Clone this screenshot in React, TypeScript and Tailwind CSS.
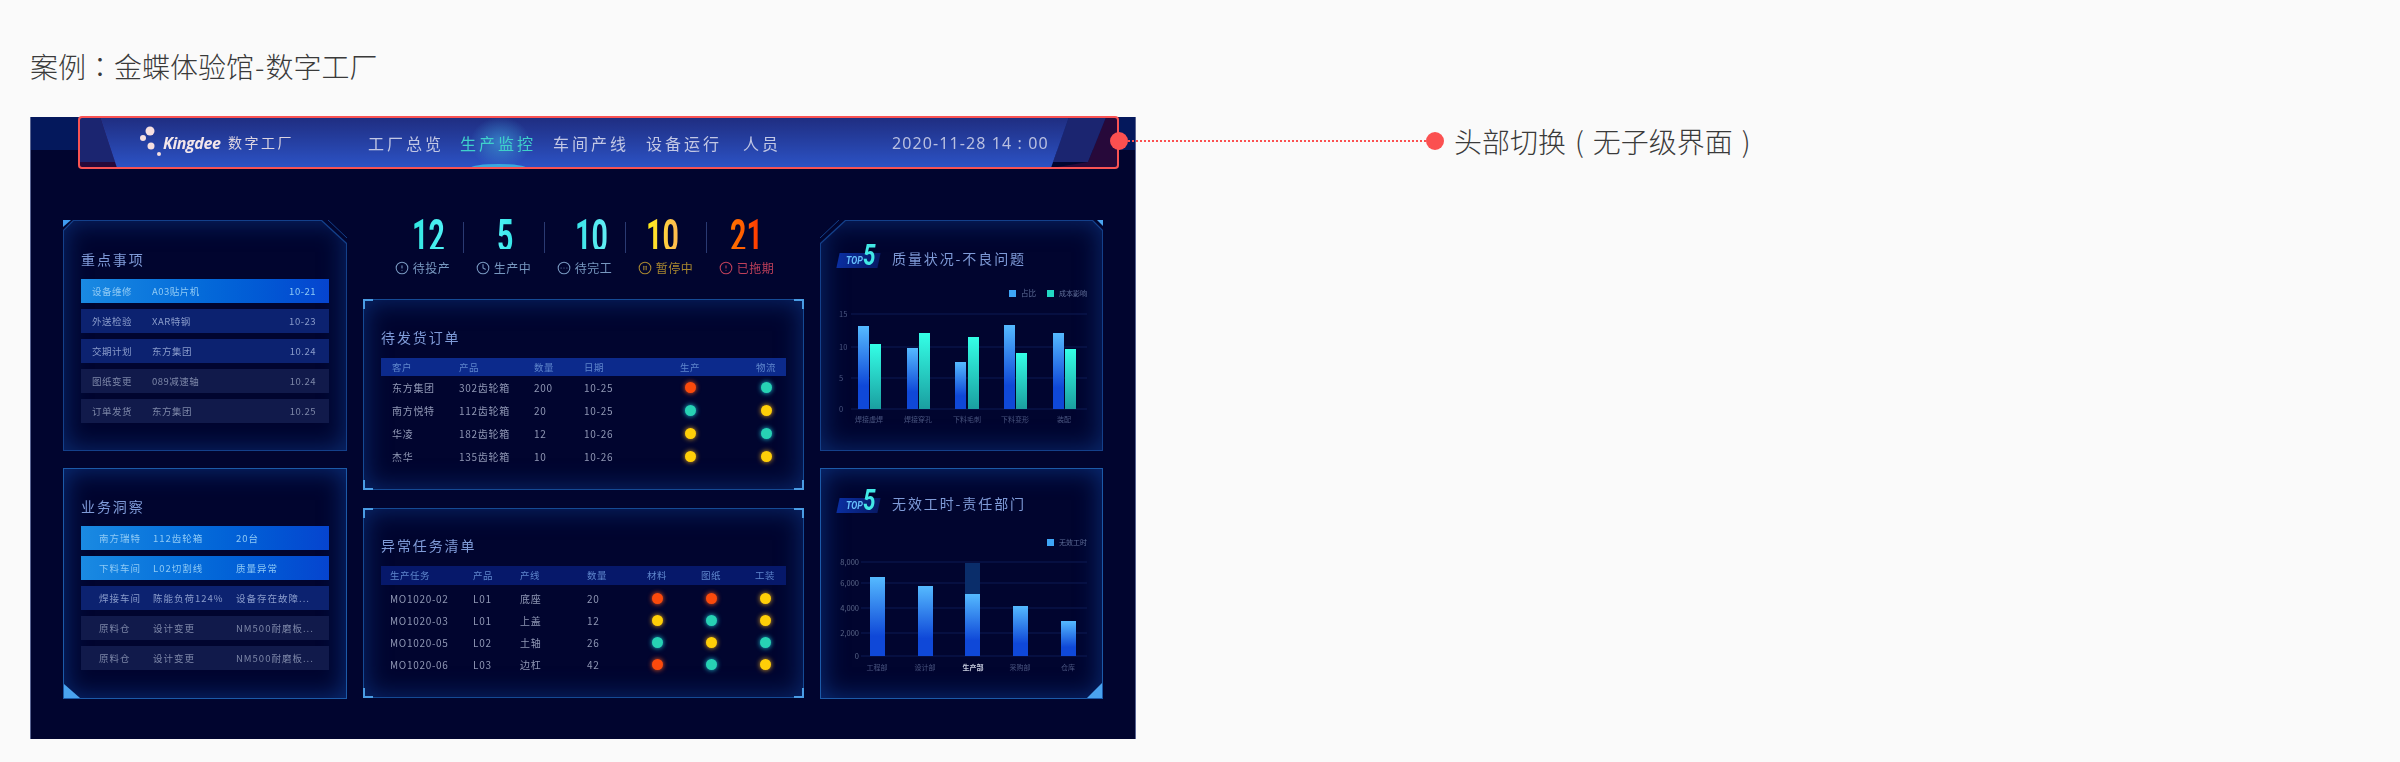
import type { ReactNode } from 'react';
import { CircleAlert, CircleEllipsis, CirclePause, Clock } from 'lucide-react';

const kpis = [
    { value: '12', label: '待投产', Icon: CircleAlert, num: 'from-[#2fe6e0] to-[#4ff2f6]', text: 'text-[#7898c0]', shift: 'ml-[11px]' },
    { value: '5', label: '生产中', Icon: Clock, num: 'from-[#4ff2f6] to-[#36e6e8]', text: 'text-[#7898c0]', shift: 'ml-[4px]' },
    { value: '10', label: '待完工', Icon: CircleEllipsis, num: 'from-[#35e4e8] to-[#62eef5]', text: 'text-[#7898c0]', shift: 'ml-[13px]' },
    { value: '10', label: '暂停中', Icon: CirclePause, num: 'from-[#ffee00] to-[#ffb94f]', text: 'text-[#a88730]', shift: 'ml-[-7px]' },
    { value: '21', label: '已拖期', Icon: CircleAlert, num: 'from-[#ff7400] to-[#ff2a00]', text: 'text-[#c0405a]', shift: 'ml-0' },
];

const focusRows = [
    ['设备维修', 'A03贴片机', '10-21', 'active'],
    ['外送检验', 'XAR特钢', '10-23', 'blue'],
    ['交期计划', '东方集团', '10.24', 'blue'],
    ['图纸变更', '089减速轴', '10.24', 'dim'],
    ['订单发货', '东方集团', '10.25', 'dim'],
];

const insightRows = [
    ['南方瑞特', '112齿轮箱', '20台', 'active'],
    ['下料车间', 'L02切割线', '质量异常', 'active'],
    ['焊接车间', '陈能负荷124%', '设备存在故障...', 'blue'],
    ['原料仓', '设计变更', 'NM500耐磨板...', 'dim'],
    ['原料仓', '设计变更', 'NM500耐磨板...', 'dim'],
];

const orders = [
    ['东方集团', '302齿轮箱', '200', '10-25', 'red', 'green'],
    ['南方悦特', '112齿轮箱', '20', '10-25', 'green', 'yellow'],
    ['华凌', '182齿轮箱', '12', '10-26', 'yellow', 'green'],
    ['杰华', '135齿轮箱', '10', '10-26', 'yellow', 'yellow'],
];

const tasks = [
    ['MO1020-02', 'L01', '底座', '20', 'red', 'red', 'yellow'],
    ['MO1020-03', 'L01', '上盖', '12', 'yellow', 'green', 'yellow'],
    ['MO1020-05', 'L02', '土轴', '26', 'green', 'yellow', 'green'],
    ['MO1020-06', 'L03', '边杠', '42', 'red', 'green', 'yellow'],
];

const rowStyles: Record<string, string> = {
    active: 'bg-gradient-to-r from-[#1a8ae2] to-[#0644cf] text-[#8fcaf5]',
    blue: 'bg-[#0c2270] text-[#8a9ccb]',
    dim: 'bg-[#111a4b] text-[#7d87a8]',
};

function Dot({ color }: { color: string }) {
    const cls =
        color === 'red'
            ? 'bg-[#fb4a0c] shadow-[0_0_5px_#ff5a1a]'
            : color === 'green'
              ? 'bg-[#27d2b4] shadow-[0_0_5px_#22c8d8]'
              : 'bg-[#ffcf08] shadow-[0_0_5px_#e8a820]';
    return <span className={`block w-[11px] h-[11px] rounded-full mx-auto ${cls}`} />;
}

function Title({ children }: { children: ReactNode }) {
    return <h2 className="text-[14px] leading-[20px] tracking-[1.9px] text-[#7f9bd8]">{children}</h2>;
}

function Top5() {
    return (
        <div className="relative w-[41px] h-[21px] flex items-end">
            <div className="absolute left-0 right-0 bottom-0 h-[15px] -skew-x-12 bg-gradient-to-r from-[#0a2ea0] to-[#071a66]" />
            <span className="relative ml-[8px] mb-[2px] w-[17px] text-[10px] leading-[11px] font-bold italic text-[#66bdfb] font-['Roboto',sans-serif] scale-x-90 origin-left">TOP</span>
            <span className="relative w-[14px] text-[30px] leading-[26px] font-bold italic text-[#42e8e6] font-['Roboto',sans-serif] scale-x-75 origin-left">5</span>
        </div>
    );
}

function Corner({ className }: { className: string }) {
    return <div className={`absolute w-[10px] h-[10px] border-[#4a9ce4] ${className}`} />;
}

function BracketPanel({ className, children }: { className: string; children: ReactNode }) {
    return (
        <section className={`relative border border-[#154a94] bg-[#01052f] shadow-[inset_0_0_26px_#0a2b70] ${className}`}>
            <Corner className="-left-px -top-px border-l-2 border-t-2" />
            <Corner className="-right-px -top-px border-r-2 border-t-2" />
            <Corner className="-left-px -bottom-px border-l-2 border-b-2" />
            <Corner className="-right-px -bottom-px border-r-2 border-b-2" />
            {children}
        </section>
    );
}

function ListRow({ row, cols }: { row: string[]; cols: string }) {
    return (
        <div className={`grid items-center h-[24px] text-[9.5px] tracking-[0.5px] ${cols} ${rowStyles[row[3]]}`}>
            <span>{row[0]}</span>
            <span>{row[1]}</span>
            <span>{row[2]}</span>
        </div>
    );
}

function BarChartOne() {
    const bars = [
        [857, 326, 869, 344],
        [906, 348, 918, 333],
        [954, 362, 967, 337],
        [1003, 325, 1015, 353],
        [1052, 333, 1064, 349],
    ];
    const labels = [['焊接虚焊', 868], ['焊接穿孔', 917], ['下料毛刺', 966], ['下料变形', 1014], ['装配', 1063]] as const;
    const ticks = [['15', 314], ['10', 347], ['5', 378], ['0', 409]] as const;
    return (
        <svg className="block mt-[15px] w-[283px] h-[145px]" viewBox="820 283 283 145">
            <defs>
                <linearGradient id="blueBar" x1="0" y1="0" x2="0" y2="1">
                    <stop offset="0" stopColor="#55baff" />
                    <stop offset="0.72" stopColor="#0f48d8" />
                </linearGradient>
                <linearGradient id="greenBar" x1="0" y1="0" x2="0" y2="1">
                    <stop offset="0" stopColor="#34ffe6" />
                    <stop offset="1" stopColor="#1a9ea0" />
                </linearGradient>
            </defs>
            <rect x="1008" y="290" width="7" height="7" fill="#3ea6f7" />
            <text x="1020" y="296" fontSize="7.5" fill="#5f6e98">占比</text>
            <rect x="1046" y="290" width="7" height="7" fill="#22d8c4" />
            <text x="1058" y="296" fontSize="7" fill="#5f6e98">成本影响</text>
            {ticks.map(([t, y]) => (
                <g key={t}>
                    <line x1="850" x2="1086" y1={y} y2={y} stroke="#0c1a55" />
                    <text x="838" y={y + 3} fontSize="7.5" fill="#4a5680">{t}</text>
                </g>
            ))}
            {bars.map(([bx, by, gx, gy]) => (
                <g key={bx}>
                    <rect x={bx} y={by} width="11" height={409 - by} fill="url(#blueBar)" />
                    <rect x={gx} y={gy} width="11" height={409 - gy} fill="url(#greenBar)" />
                </g>
            ))}
            {labels.map(([t, x]) => (
                <text key={t} x={x} y="422" fontSize="7" textAnchor="middle" fill="#4a5680">{t}</text>
            ))}
        </svg>
    );
}

function BarChartTwo() {
    const bars = [[869, 577], [917, 586], [964, 594], [1012, 606], [1060, 621]];
    const labels = [['工程部', 876], ['设计部', 924], ['生产部', 972], ['采购部', 1019], ['仓库', 1067]] as const;
    const ticks = [['8,000', 562], ['6,000', 583], ['4,000', 608], ['2,000', 633], ['0', 656]] as const;
    return (
        <svg className="block mt-[19px] w-[283px] h-[145px]" viewBox="820 532 283 145">
            <defs>
                <linearGradient id="blueBarTwo" x1="0" y1="0" x2="0" y2="1">
                    <stop offset="0" stopColor="#55baff" />
                    <stop offset="0.75" stopColor="#0f48d8" />
                </linearGradient>
            </defs>
            <rect x="1046" y="539" width="7" height="7" fill="#3ea6f7" />
            <text x="1058" y="545" fontSize="7" fill="#5f6e98">无效工时</text>
            {ticks.map(([t, y]) => (
                <g key={t}>
                    <line x1="860" x2="1086" y1={y} y2={y} stroke="#0c1a55" />
                    <text x="858" y={y + 3} fontSize="7.5" textAnchor="end" fill="#5a6688">{t}</text>
                </g>
            ))}
            <rect x="964" y="563" width="15" height="31" fill="#0a2d6a" />
            {bars.map(([x, y]) => (
                <rect key={x} x={x} y={y} width="15" height={656 - y} fill="url(#blueBarTwo)" />
            ))}
            {labels.map(([t, x]) => (
                <text
                    key={t}
                    x={x}
                    y="670"
                    fontSize="7"
                    textAnchor="middle"
                    fontWeight={t === '生产部' ? 700 : 400}
                    fill={t === '生产部' ? '#c8cedf' : '#4a5680'}
                >
                    {t}
                </text>
            ))}
        </svg>
    );
}

function Header() {
    return (
        <header className="relative ml-[47px] w-[1041px] h-[51px] flex items-center">
            <svg className="absolute inset-0 w-full h-full" viewBox="78 117 1040 51" preserveAspectRatio="none">
                <defs>
                    <linearGradient id="ribbon" x1="0" y1="0" x2="0" y2="1">
                        <stop offset="0" stopColor="#1f2d80" />
                        <stop offset="1" stopColor="#2c53c6" />
                    </linearGradient>
                    <radialGradient id="tabGlow" cx="0.5" cy="0.5" r="0.5">
                        <stop offset="0" stopColor="#3a8fd0" stopOpacity="0.8" />
                        <stop offset="1" stopColor="#3a8fd0" stopOpacity="0" />
                    </radialGradient>
                </defs>
                <rect x="78" y="117" width="40" height="51" fill="#27093a" />
                <polygon points="78,117 100,117 115,162 78,162" fill="#1b2570" />
                <polygon points="1050,168 1118,168 1118,117 1105,117 1087,162" fill="#27093a" />
                <polygon points="1068,117 1105,117 1087,162 1052,162" fill="#1b2570" />
                <polygon points="100,117 1068,117 1050,168 117,168" fill="url(#ribbon)" />
                <rect x="470" y="117" width="60" height="51" fill="url(#tabGlow)" />
                <ellipse cx="498" cy="168" rx="28" ry="4" fill="#39a8e0" />
            </svg>
            <div className="relative flex items-center text-[#c2c7e4]">
                <svg className="ml-[60px] w-[24px] h-[36px]" viewBox="0 0 24 36">
                    <circle cx="12" cy="6" r="4.5" fill="#f6dfe0" />
                    <circle cx="5" cy="13" r="3" fill="#f6dfe0" />
                    <circle cx="13" cy="21" r="3.5" fill="#f6dfe0" />
                    <circle cx="21" cy="29" r="2" fill="#f6dfe0" />
                </svg>
                <span className="ml-[1px] w-[65px] text-[16px] font-bold italic text-[#f3e6ea] font-['Open_Sans',sans-serif] tracking-[-0.4px]">Kingdee</span>
                <span className="text-[14px] tracking-[2.5px] text-[#dcd4e0]">数字工厂</span>
                <nav className="ml-[74px] flex text-[16px] tracking-[3px] leading-[24px]">
                    <span className="w-[92px]">工厂总览</span>
                    <span className="w-[93px] text-[#3fd0cb]">生产监控</span>
                    <span className="w-[93px]">车间产线</span>
                    <span className="w-[97px]">设备运行</span>
                    <span className="w-[149px]">人员</span>
                </nav>
                <span className="text-[16px] tracking-[1.1px] text-[#b9bfe0] font-['Noto_Sans',sans-serif]">2020-11-28 14 : 00</span>
            </div>
        </header>
    );
}

export default function App() {
    return (
        <div className="relative w-[2400px] h-[762px] overflow-hidden bg-[#fafafa] font-['Noto_Sans_CJK_SC','Noto_Sans',sans-serif]">
            <h1 className="pl-[30px] pt-[46px] h-[117px] text-[28px] leading-[40px] font-light text-[#3a3a3a]">
                案例<span className="font-['Noto_Sans_CJK_TC',sans-serif]">：</span>金蝶体验馆<span className="mx-[1px]">-</span>数字工厂
            </h1>

            <main className="ml-[30px] w-[1106px] h-[622px] border-x border-[#5a6592] bg-[linear-gradient(#04185c_0,#04185c_33px,#01052f_33px)] blur-[0.4px]">
                <Header />
                <div className="grid grid-cols-[284px_441px_283px] gap-x-[16px] pl-[32px] pt-[52px] bg-[#01052f]">
                    <div className="flex flex-col gap-[17px]">
                        <section className="relative h-[231px]">
                            <div className="h-full p-px bg-[#14408a] [clip-path:polygon(10px_0,calc(100%-25px)_0,100%_23px,100%_100%,0_100%,0_10px)]">
                                <div className="h-full pt-[28px] px-[17px] bg-[#01052f] shadow-[inset_0_0_26px_#0a2b70] [clip-path:polygon(10px_0,calc(100%-25px)_0,100%_23px,100%_100%,0_100%,0_10px)]">
                                    <Title>重点事项</Title>
                                    <div className="mt-[10px] flex flex-col gap-[6px]">
                                        {focusRows.map(row => (
                                            <ListRow key={row[0]} row={row} cols="grid-cols-[60px_1fr_auto] pl-[11px] pr-[13px]" />
                                        ))}
                                    </div>
                                </div>
                            </div>
                            <svg className="absolute left-0 top-0 w-full h-full pointer-events-none" viewBox="0 0 284 231">
                                <polygon points="0,0 8,0 0,7" fill="#3f9bf0" />
                                <line x1="264" y1="-1" x2="284" y2="18" stroke="#14408a" />
                            </svg>
                        </section>

                        <section className="relative h-[231px] border border-[#1c5aa8] bg-[#01052f] shadow-[inset_0_0_26px_#0a2f7a]">
                            <div className="pt-[27px] px-[17px]">
                                <Title>业务洞察</Title>
                                <div className="mt-[10px] flex flex-col gap-[6px]">
                                    {insightRows.map((row, i) => (
                                        <ListRow key={i} row={row} cols="grid-cols-[54px_83px_1fr] pl-[18px] tracking-[1px]" />
                                    ))}
                                </div>
                            </div>
                            <svg className="absolute left-0 bottom-0 w-[16px] h-[14px]" viewBox="0 0 16 14">
                                <polygon points="0,0 16,14 0,14" fill="#4aa3ef" />
                            </svg>
                        </section>
                    </div>

                    <div className="flex flex-col">
                        <div className="grid grid-cols-[repeat(5,81px)] h-[79px] px-[19px]">
                            {kpis.map(({ value, label, Icon, num, text, shift }, i) => (
                                <div key={i} className="relative flex flex-col items-center">
                                    {i > 0 && <div className="absolute left-0 top-[2px] w-px h-[31px] bg-[#2a3a72]" />}
                                    <span className={`inline-block h-[38px] mt-[-9px] text-[46px] leading-[50px] font-bold font-['Roboto',sans-serif] scale-x-[0.62] bg-gradient-to-r bg-clip-text text-transparent ${shift} ${num}`}>{value}</span>
                                    <div className={`mt-[11px] flex items-center gap-[4px] text-[12px] leading-[16px] tracking-[0.5px] ${text}`}>
                                        <Icon size={14} strokeWidth={1.8} />
                                        <span>{label}</span>
                                    </div>
                                </div>
                            ))}
                        </div>

                        <BracketPanel className="h-[191px] px-[17px] pt-[27px]">
                            <Title>待发货订单</Title>
                            <div className="mt-[11px] grid items-center grid-cols-[67px_75px_50px_70px_72px_60px] pl-[11px] h-[18px] bg-[#0c2a8c] text-[9.5px] tracking-[0.5px] text-[#5f86cc]">
                                <span>客户</span>
                                <span>产品</span>
                                <span>数量</span>
                                <span>日期</span>
                                <span className="text-center">生产</span>
                                <span className="text-center pl-5">物流</span>
                            </div>
                            {orders.map(o => (
                                <div key={o[0]} className="grid items-center grid-cols-[67px_75px_50px_70px_72px_60px] pl-[11px] h-[23px] text-[10px] tracking-[0.7px] text-[#8f97b4]">
                                    <span>{o[0]}</span>
                                    <span>{o[1]}</span>
                                    <span>{o[2]}</span>
                                    <span>{o[3]}</span>
                                    <Dot color={o[4]} />
                                    <div className="pl-5"><Dot color={o[5]} /></div>
                                </div>
                            ))}
                        </BracketPanel>

                        <BracketPanel className="mt-[18px] h-[190px] px-[17px] pt-[26px]">
                            <Title>异常任务清单</Title>
                            <div className="mt-[11px] grid items-center grid-cols-[83px_47px_67px_50px_40px_68px_40px] pl-[9px] h-[19px] bg-[#06186a] text-[9.5px] tracking-[0.5px] text-[#5f86cc]">
                                <span>生产任务</span>
                                <span>产品</span>
                                <span>产线</span>
                                <span>数量</span>
                                <span className="text-center">材料</span>
                                <span className="text-center">图纸</span>
                                <span className="text-center">工装</span>
                            </div>
                            <div className="pt-[2px]">
                                {tasks.map(t => (
                                    <div key={t[0]} className="grid items-center grid-cols-[83px_47px_67px_50px_40px_68px_40px] pl-[9px] h-[22px] text-[10px] tracking-[0.7px] text-[#8f97b4]">
                                        <span>{t[0]}</span>
                                        <span>{t[1]}</span>
                                        <span>{t[2]}</span>
                                        <span>{t[3]}</span>
                                        <Dot color={t[4]} />
                                        <Dot color={t[5]} />
                                        <Dot color={t[6]} />
                                    </div>
                                ))}
                            </div>
                        </BracketPanel>
                    </div>

                    <div className="flex flex-col gap-[17px]">
                        <section className="relative h-[231px]">
                            <div className="h-full p-px bg-[#14408a] [clip-path:polygon(25px_0,calc(100%-10px)_0,100%_10px,100%_100%,0_100%,0_23px)]">
                                <div className="h-full bg-[#01052f] shadow-[inset_0_0_26px_#0a2b70] [clip-path:polygon(25px_0,calc(100%-10px)_0,100%_10px,100%_100%,0_100%,0_23px)]">
                                    <div className="flex items-center pl-[17px] pt-[26px]">
                                        <Top5 />
                                        <div className="ml-[13px]"><Title>质量状况-不良问题</Title></div>
                                    </div>
                                    <BarChartOne />
                                </div>
                            </div>
                            <svg className="absolute left-0 top-0 w-full h-full pointer-events-none" viewBox="0 0 283 231">
                                <polygon points="277,0 283,0 283,6" fill="#4aa3ef" />
                                <line x1="20" y1="-1" x2="0" y2="18" stroke="#14408a" />
                            </svg>
                        </section>

                        <section className="relative h-[231px] border border-[#1c5aa8] bg-[#01052f] shadow-[inset_0_0_26px_#0a2f7a]">
                            <div className="flex items-center pl-[17px] pt-[23px]">
                                <Top5 />
                                <div className="ml-[13px]"><Title>无效工时-责任部门</Title></div>
                            </div>
                            <BarChartTwo />
                            <svg className="absolute right-0 bottom-0 w-[15px] h-[15px]" viewBox="0 0 15 15">
                                <polygon points="15,0 15,15 0,15" fill="#4aa3ef" />
                            </svg>
                        </section>
                    </div>
                </div>
            </main>

            <div className="absolute left-[78px] top-[116px] w-[1041px] h-[53px] rounded-[4px] border-2 border-[#f95353]" />
            <div className="absolute left-[1110px] top-[127px] h-[28px] flex items-center">
                <span className="w-[18px] h-[18px] rounded-full bg-[#fb5050]" />
                <span className="w-[298px] border-t-2 border-dotted border-[#fb5050]" />
                <span className="w-[18px] h-[18px] rounded-full bg-[#fb5050]" />
                <span className="ml-[10px] text-[28px] leading-[40px] font-light text-[#3a3a3a] whitespace-nowrap">
                    头部切换<span className="mx-[9px]">(</span>无子级界面<span className="mx-[9px]">)</span>
                </span>
            </div>
        </div>
    );
}
